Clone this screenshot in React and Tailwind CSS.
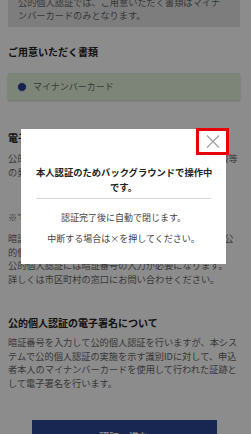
export default function App() {
  return (
    <div className="relative h-[434px] w-[251px] overflow-hidden bg-white font-['Noto_Sans_CJK_JP','Noto_Sans',sans-serif] text-[#666]">
      <div className="pl-[8px] pr-[11px]">
        <div className="-mt-[10px] whitespace-nowrap bg-[#e4e4e4] px-[10px] pt-[6px] pb-[5px] text-[9.2px] leading-[13px]">
          公的個人認証では、ご用意いただく書類はマイナ
          <br />
          ンバーカードのみとなります。
        </div>

        <h2 className="mt-[18px] text-[10px] font-bold leading-[14px] text-[#222]">ご用意いただく書類</h2>

        <div className="mt-[14px] flex h-[27px] items-center gap-[6px] bg-[#e3f3da] pl-[9px] shadow-[0_1px_2px_rgba(0,0,0,0.2)]">
          <span className="h-[10px] w-[10px] rounded-full border-[1.5px] border-[#dde3f0] bg-[#24408f]" />
          <span className="text-[9px] leading-[12px]">マイナンバーカード</span>
        </div>

        <h2 className="mt-[31px] text-[10px] font-bold leading-[14px] text-[#222]">電子証明書の確認について</h2>
        <p className="mt-[6px] whitespace-nowrap text-[9.2px] leading-[14px]">
          公的個人認証サービスでは、利用者証明書の失効情報等
          <br />
          の発行を行います。
        </p>

        <p className="mt-[31px] whitespace-nowrap text-[9.2px] leading-[14px]">※で入力する暗証番号について</p>
        <p className="mt-[8px] whitespace-nowrap text-[9.2px] leading-[13.5px]">
          暗証番号を5回連続で間違えるとロックされるため、公
          <br />
          的個人認証サービスの利用ができなくなります。
          <br />
          公的個人認証には暗証番号の入力が必要になります。
          <br />
          詳しくは市区町村の窓口にお問い合わせください。
        </p>

        <h2 className="mt-[30px] text-[10px] font-bold leading-[14px] text-[#222]">公的個人認証の電子署名について</h2>
        <p className="mt-[6px] whitespace-nowrap text-[9.2px] leading-[13.7px]">
          暗証番号を入力して公的個人認証を行いますが、本シス
          <br />
          テムで公的個人認証の実施を示す識別IDに対して、申込
          <br />
          者本人のマイナンバーカードを使用して行われた証跡と
          <br />
          して電子署名を行います。
        </p>

        <button className="mx-auto mt-[29px] flex h-[34px] w-[185px] items-center justify-center bg-[#2a4795] text-[10px] font-bold text-white">
          認証へ進む
        </button>
      </div>

      <div className="absolute inset-0 bg-black/45" />

      <div className="absolute left-[21px] top-[129px] w-[205px] bg-white px-[15px] pt-[36px] pb-[18px] text-center">
        <p className="whitespace-nowrap text-[9.3px] font-bold leading-[14.5px] text-[#222]">
          本人認証のためバックグラウンドで操作中
          <br />
          です。
        </p>
        <div className="mt-[4px] h-px bg-[#d4d4d4]" />
        <p className="mt-[12px] whitespace-nowrap text-[9px] leading-[14px] text-[#444]">認証完了後に自動で閉じます。</p>
        <p className="mt-[7px] whitespace-nowrap text-[9px] leading-[14px] text-[#444]">中断する場合は×を押してください。</p>

        <div className="absolute left-[175px] top-[-1px] flex h-[27px] w-[33px] items-center justify-center border-[3px] border-[#e8000b]">
          <svg width="14" height="13" viewBox="0 0 14 13" fill="none">
            <path d="M1 0.5L13 12.5M13 0.5L1 12.5" stroke="#a3a3a3" strokeWidth="1.3" />
          </svg>
        </div>
      </div>
    </div>
  );
}
